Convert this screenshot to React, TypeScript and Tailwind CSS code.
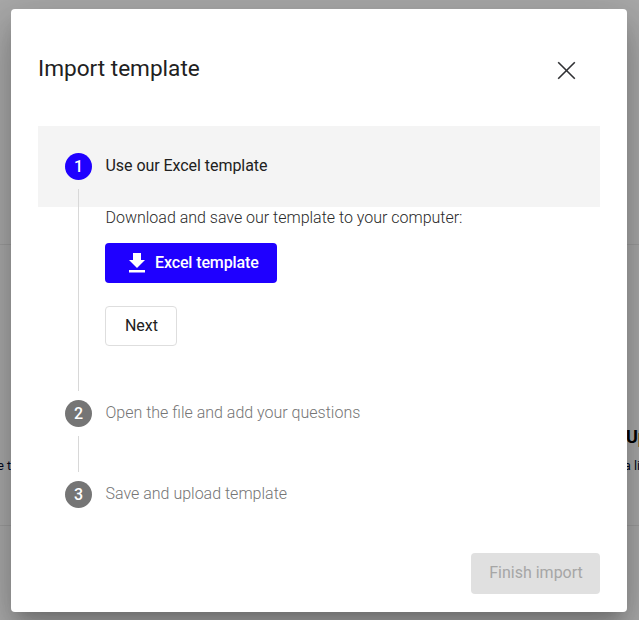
import { clsx } from "clsx";

interface Step {
  label: string;
  lineClass?: string;
}

const STEPS: Step[] = [
  { label: "Use our Excel template", lineClass: "h-[202px]" },
  { label: "Open the file and add your questions", lineClass: "h-9" },
  { label: "Save and upload template" },
];

function PageBehind() {
  return (
    <div className="absolute inset-0 flex flex-col bg-[#fafafa] pt-[244px]">
      <div className="flex h-[282px] justify-between border-y border-[#e6e6e6] text-[#000a2e]">
        <div className="flex w-[11px] justify-end overflow-hidden pt-[213px]">
          <span className="whitespace-nowrap text-[12.5px] leading-4">e t</span>
        </div>
        <div className="w-[13px] overflow-hidden whitespace-nowrap pt-[180px]">
          <h3 className="text-[18px] font-bold leading-6 text-black">Upload</h3>
          <p className="-ml-0.5 mt-[9px] text-[12.5px] leading-4">a list</p>
        </div>
      </div>
    </div>
  );
}

function StepContent() {
  return (
    <div className="flex h-[166px] flex-col items-start pl-[67px]">
      <p className="pl-[0.5px] text-base font-light leading-[22px] tracking-[-0.01px] text-[#2a2a2a]">
        Download and save our template to your computer:
      </p>
      <button className="mt-3.5 flex h-10 w-[172px] items-center rounded bg-[#1f00ff] pl-6 text-base font-medium tracking-[-0.12px] text-white">
        <svg className="mr-2.5 h-5 w-4" viewBox="0 0 16 20" fill="currentColor">
          <path d="M4 0h8v7h4l-8 8-8-8h4zM0 17h16v2.6H0z" />
        </svg>
        Excel template
      </button>
      <button className="mt-[23px] h-10 w-[72px] rounded border border-[#dedede] pl-px text-base text-[#212121]">
        Next
      </button>
    </div>
  );
}

export default function App() {
  return (
    <div className="relative h-[620px] w-[639px] overflow-hidden font-['Roboto',sans-serif]">
      <PageBehind />
      <div className="absolute inset-0 bg-black/32 pl-[11px] pt-[9px]">
        <div
          role="dialog"
          className="flex h-[603px] w-[616px] flex-col rounded bg-white px-[27px] shadow-[0_11px_15px_-7px_rgba(0,0,0,0.2),0_24px_38px_3px_rgba(0,0,0,0.14),0_9px_46px_8px_rgba(0,0,0,0.12)]"
        >
          <header className="flex h-[117px] items-center justify-between pr-6 pt-0.5">
            <h2 className="text-[22.6px] leading-8 text-[#212121]">Import template</h2>
            <button aria-label="Close" className="mt-1">
              <svg className="size-[19px]" viewBox="0 0 19 19" fill="none" stroke="#303134" strokeWidth="1.6">
                <path d="M1.2 1.2l16.6 16.6M17.8 1.2L1.2 17.8" />
              </svg>
            </button>
          </header>

          <div>
            {STEPS.map((step, index) => {
              const active = index === 0;
              return (
                <section key={step.label} className="relative">
                  <div className={clsx("flex h-[81px] items-center gap-[13.5px] px-[27px]", active && "bg-[#f4f4f4]")}>
                    <span
                      className={clsx(
                        "flex size-[27px] items-center justify-center rounded-full text-base font-medium text-white",
                        active ? "bg-[#1f00ff]" : "bg-[#757575]"
                      )}
                    >
                      {index + 1}
                    </span>
                    <span
                      className={clsx(
                        "pb-px text-base",
                        active ? "tracking-[-0.05px] text-[#212121]" : "font-light text-[#757575]"
                      )}
                    >
                      {step.label}
                    </span>
                  </div>
                  {step.lineClass ? (
                    <div className={clsx("absolute left-10 top-[63px] w-px bg-[#d8d8d8]", step.lineClass)} />
                  ) : null}
                  {active ? <StepContent /> : null}
                </section>
              );
            })}
          </div>

          <footer className="mt-[18px] flex justify-end">
            <button disabled className="h-[41px] w-[129px] rounded bg-[#e0e0e0] pb-px pl-px text-base text-[#a6a6a6]">
              Finish import
            </button>
          </footer>
        </div>
      </div>
    </div>
  );
}
